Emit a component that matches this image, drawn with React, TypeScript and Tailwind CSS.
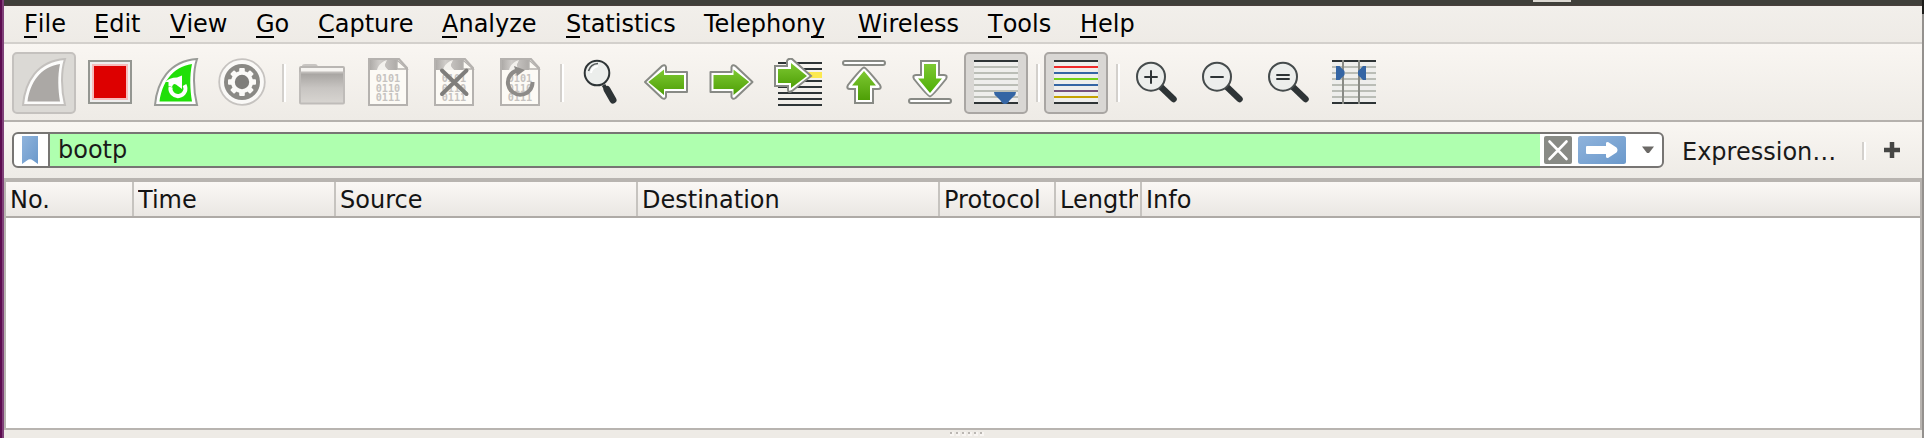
import React from "react";

const DARK = "#2e3436";

function Menu({ w, a = "", u, b }: { w: string; a?: string; u: string; b: string }) {
  return (
    <div className={`${w} shrink-0`}>
      {a}
      <span className="relative inline-block">
        {u}
        <span className="absolute left-0 right-px top-[30px] h-[2px] bg-black" />
      </span>
      {b}
    </div>
  );
}

function Tool({ children, state = "" }: { children: React.ReactNode; state?: string }) {
  return (
    <div className={`flex h-[62px] w-[64px] shrink-0 justify-center rounded-[5px] border-2 pt-[4px] ${state || "border-transparent"}`}>
      <svg width="48" height="48" viewBox="0 0 48 48" className="shrink-0">
        {children}
      </svg>
    </div>
  );
}

function Sep() {
  return (
    <div className="mt-[12px] flex h-[38px] w-[12px] shrink-0 self-start pl-[6px]">
      <div className="w-[2px] bg-[#d3d0cc]" />
      <div className="w-[2px] bg-white" />
    </div>
  );
}

function Fin({ outline, edge, fill }: { outline: string; edge: string; fill: string }) {
  return (
    <>
      <path d="M3 47C5 24 17 3 45 1C41 13 41 31 45 47Z" fill={edge} stroke={outline} strokeWidth="2" />
      <path d="M7.5 43.5C10 25 20 9 40 6C37.5 18 38 31 40 43.5Z" fill={fill} />
    </>
  );
}

function Doc() {
  return (
    <>
      <path d="M5 1H35L43 10V47H5Z" fill="#fcfaf5" />
      <path d="M6 2H33V12H24L20 8L23 2L14 12H6Z" fill="url(#docband)" />
      <path d="M23 2C17 4 14 8 13 12H24C20 9 20 5 23 2Z" fill="#f3f1ed" />
      <path d="M33 2V11H43Z" fill="#fcfaf5" stroke="#b5b2af" strokeWidth="1.4" />
      <path d="M5 1H35L43 10V47H5Z" fill="none" stroke="#b5b2af" strokeWidth="2" />
      <g fontFamily="DejaVu Sans Mono, monospace" fontSize="10.2" fill="#c6c3c0" fontWeight="bold">
        <text x="11.7" y="24.2">0101</text>
        <text x="11.7" y="33.6">0110</text>
        <text x="11.7" y="43">0111</text>
      </g>
    </>
  );
}

const backPath = "M3 24L20 8Q23 6 24 9V14H45V34H24V39Q23 42 20 40Z";
const backInner = "M6.3 24L22 11.5V17H42V31H22V37Z";

function Arrow() {
  return (
    <>
      <path d={backPath} fill="#fff" stroke="#888a85" strokeWidth="2" strokeLinejoin="round" />
      <path d={backInner} fill="url(#green)" />
    </>
  );
}

function UpArrow({ id }: { id: string }) {
  return (
    <>
      <rect x="3" y="3" width="42" height="4" rx="2" fill="#fff" stroke="#888a85" strokeWidth="2" />
      <path d="M24 9.5Q26 9.5 40 27Q42 31 38 31H33V45H15V31H10Q6 31 8 27Q22 9.5 24 9.5Z" fill="#fff" stroke="#888a85" strokeWidth="2" />
      <path d="M24 13L36 27.5H30V42H18V27.5H12Z" fill={`url(#${id})`} />
    </>
  );
}

function Sheet({ colors }: { colors: string[] }) {
  return (
    <>
      <rect x="2" y="2" width="44" height="44" fill="#eeeeec" />
      {colors.map((c, i) => (
        <rect key={i} x="2" y={2 + i * 6} width="44" height="2" fill={c} />
      ))}
    </>
  );
}
const G = "#babdb6";
const plain = [DARK, G, G, G, G, G, G, DARK];

function Lens({ children }: { children: React.ReactNode }) {
  return (
    <>
      <path d="M29 29L41.5 41" stroke={DARK} strokeWidth="6.5" strokeLinecap="round" />
      <circle cx="19" cy="18.7" r="14" fill="#eceeec" stroke="#454b4c" strokeWidth="2" />
      <g stroke={DARK} strokeWidth="2">{children}</g>
    </>
  );
}

const teeth = [0, 45, 90, 135, 180, 225, 270, 315];

function Defs() {
  return (
    <svg width="0" height="0" className="absolute">
      <defs>
        <linearGradient id="green" x1="0" y1="0" x2="0" y2="1">
          <stop offset="0" stopColor="#7dc832" /><stop offset="1" stopColor="#4e9f06" />
        </linearGradient>
        <linearGradient id="greenflip" x1="0" y1="1" x2="0" y2="0">
          <stop offset="0" stopColor="#7dc832" /><stop offset="1" stopColor="#4eaf06" />
        </linearGradient>
        <linearGradient id="folder" x1="0" y1="0" x2="0" y2="1">
          <stop offset="0" stopColor="#a5a29f" /><stop offset=".5" stopColor="#c8c5c2" /><stop offset="1" stopColor="#d8d5d1" />
        </linearGradient>
        <linearGradient id="docband" x1="0" y1="0" x2="1" y2="0">
          <stop offset="0" stopColor="#aeaba8" /><stop offset=".35" stopColor="#cfccc9" /><stop offset="1" stopColor="#aeaba8" />
        </linearGradient>
        <linearGradient id="blue" x1="0" y1="0" x2="1" y2="1">
          <stop offset="0" stopColor="#8fb3dc" /><stop offset="1" stopColor="#6b99cb" />
        </linearGradient>
      </defs>
    </svg>
  );
}

function Toolbar() {
  const pressed = "border-[#a9a6a3] bg-[#d9d7d4]";
  return (
    <div className="flex h-[78px] gap-[2px] border-b-2 border-[#b5b1ad] bg-linear-to-b from-[#f9f6f2] to-[#eeebe6] pt-[8px] pl-[8px]">
      <Tool state="border-[#c4c1be] bg-[#dbd9d5]"><Fin outline="#c3c0bd" edge="#fcfcfb" fill="#aba8a5" /></Tool>
      <Tool>
        <rect x="3" y="3" width="42" height="42" fill="#eeeeee" stroke="#949691" strokeWidth="2" />
        <rect x="6" y="6" width="36" height="36" fill="#f6bcbc" />
        <rect x="8" y="8" width="32" height="32" fill="#dd0000" />
      </Tool>
      <Tool>
        <Fin outline="#999b97" edge="#fff" fill="#20df08" />
        <path d="M32.5 27A7.5 7.5 0 1 1 18.6 29" fill="none" stroke="#fff" strokeWidth="4" />
        <path d="M13.5 24Q17 19.5 25 19.5L30 17.5V31L24 26.5Q21 25 20 29L16.5 28V24Z" fill="#fff" />
      </Tool>
      <Tool>
        <circle cx="24" cy="24" r="22.8" fill="#faf9f7" stroke="#c6c3c0" strokeWidth="1.8" />
        <circle cx="24" cy="24" r="18" fill="#8a8985" />
        <circle cx="24" cy="24" r="11" fill="#fbfaf8" />
        {teeth.map((t) => (
          <rect key={t} x="21.2" y="10" width="5.6" height="6" rx="1" fill="#fbfaf8" transform={`rotate(${t} 24 24)`} />
        ))}
        <circle cx="24" cy="24" r="7.2" fill="#7f7e7b" />
      </Tool>
      <Sep />
      <Tool>
        <path d="M5 10V8Q5 7 7 7H17Q19 7 19 10" fill="#d8d5d1" stroke="#c8c5c2" strokeWidth="2" />
        <rect x="2" y="9" width="44" height="8" rx="1" fill="#f6f4f1" stroke="#b9b6b3" strokeWidth="2" />
        <rect x="2" y="14.5" width="44" height="31" rx="1" fill="url(#folder)" stroke="#bfbcb9" strokeWidth="2" />
      </Tool>
      <Tool><Doc /></Tool>
      <Tool><Doc /><path d="M12 12.5L36.5 36M36.5 12.5L12 36" stroke="#7f7e7b" strokeWidth="4" strokeLinecap="round" /></Tool>
      <Tool>
        <Doc />
        <path d="M36.5 24A12.3 12.3 0 1 1 21 12.5" fill="none" stroke="#8d8b88" strokeWidth="4" />
        <path d="M18 8L29 12L21 18Z" fill="#8d8b88" />
      </Tool>
      <Sep />
      <Tool>
        <path d="M27.5 27L30 31" stroke={DARK} strokeWidth="4" />
        <path d="M31 31.5L37 42" stroke={DARK} strokeWidth="7" strokeLinecap="round" />
        <circle cx="21" cy="15" r="12.3" fill="#eceeec" stroke={DARK} strokeWidth="2" />
        <path d="M12.5 13Q14.5 6 22 5.5" fill="none" stroke="#555b5c" strokeWidth="1.6" />
        <path d="M15 15Q15.5 9.5 22 8" fill="none" stroke="#fff" strokeWidth="2" />
      </Tool>
      <Tool><Arrow /></Tool>
      <Tool><g transform="matrix(-1 0 0 1 47.5 0)"><Arrow /></g></Tool>
      <Tool>
        {[4, 10, 22, 28, 34, 40, 46].map((y) => <rect key={y} x="4" y={y} width="44" height="2" fill={DARK} />)}
        <rect x="28" y="14" width="20" height="6" fill="#fce94f" />
        <path d="M1 8H13V3Q14 0 18 1L37 18L18 33Q14 35 14 32V28H1Z" fill="#fff" stroke="#888a85" strokeWidth="2" />
        <path d="M4 11H17V5L33 18L17 30V25H4Z" fill="url(#green)" />
      </Tool>
      <Tool><UpArrow id="green" /></Tool>
      <Tool><g transform="matrix(1 0 0 -1 0 48)"><UpArrow id="greenflip" /></g></Tool>
      <Tool state={pressed}>
        <Sheet colors={plain} />
        <path d="M22 34H44Q44 37 41.5 38.5L37.5 42.5Q36.5 45 34 46H32Q29.5 45 28.5 42.5L24.5 38.5Q22 37 22 34Z" fill="#3465a4" />
      </Tool>
      <Sep />
      <Tool state={pressed}>
        <Sheet colors={[DARK, "#ef2929", "#3465a4", "#73d216", "#3465a4", "#75507b", "#c4a000", DARK]} />
      </Tool>
      <Sep />
      <Tool><Lens><path d="M12.3 19H25.7M19 12.3V25.7" /></Lens></Tool>
      <Tool><Lens><path d="M12.3 19H25.7" /></Lens></Tool>
      <Tool><Lens><path d="M12.3 17H25.7M12.3 21H25.7" /></Lens></Tool>
      <Tool>
        <Sheet colors={plain} />
        <path d="M13 2V46M29 2V46" stroke="#888a85" strokeWidth="2" />
        <path d="M6 8H9.5L14.5 13V17L9.5 22H6ZM36 8H33L28 13V17L33 22H36Z" fill="#3465a4" />
      </Tool>
    </div>
  );
}

function FilterBar() {
  return (
    <div className="flex h-[60px] border-b-4 border-[#b8b4b0] bg-linear-to-b from-[#f9f6f2] to-[#eeebe6] pt-[10px] pl-[8px]">
      <div className="flex h-[36px] w-[1652px] shrink-0 overflow-hidden rounded-[6px] border-2 border-[#777573] bg-white">
        <div className="flex w-[36px] shrink-0 border-r-2 border-[#777573] pt-[2px] pl-[8px]">
          <svg width="16" height="28"><path d="M0 0H16V28L11 24.5Q8 22 5 24.5L0 28Z" fill="url(#blue)" /></svg>
        </div>
        <div className="w-[1490px] shrink-0 bg-[#afffaf] pl-[8px] leading-[32px]">bootp</div>
        <div className="flex items-center pl-[4px]">
          <svg width="28" height="28">
            <rect width="28" height="28" rx="2" fill="#888a85" />
            <path d="M5.5 5.5L22.5 23M22.5 5.5L5.5 23" stroke="#fff" strokeWidth="2.6" strokeLinecap="round" />
          </svg>
          <svg width="48" height="28" className="ml-[6px]">
            <rect width="48" height="28" rx="2.5" fill="url(#blue)" />
            <path d="M9 10H28V7Q28 6 30 6L38.5 11.5Q40.5 14 38.5 16.5L30 22Q28 22 28 21V18H9Q8 18 8 17V11Q8 10 9 10Z" fill="#fff" />
          </svg>
          <svg width="14" height="8" className="ml-[15px]"><path d="M1 .5H13L8 7H6Z" fill="#6b6966" /></svg>
        </div>
      </div>
      <div className="mt-[2px] ml-[18px] w-[180px] shrink-0 leading-[36px]">Expression…</div>
      <div className="mt-[10px] flex h-[18px] w-[4px] shrink-0">
        <div className="w-[2px] bg-[#d3d0cc]" /><div className="w-[2px] bg-white" />
      </div>
      <svg width="16" height="16" className="mt-[10px] ml-[18px] shrink-0"><path d="M0 8H16M8 0V16" stroke="#464644" strokeWidth="4.5" /></svg>
    </div>
  );
}

const cols = [
  ["No.", "w-[128px]"],
  ["Time", "w-[202px]"],
  ["Source", "w-[302px]"],
  ["Destination", "w-[302px]"],
  ["Protocol", "w-[116px]"],
  ["Length", "w-[86px]"],
];

export default function App() {
  return (
    <div className="flex h-[438px] w-[1924px] overflow-hidden bg-[#eeebe6] font-['DejaVu_Sans',sans-serif] text-[24px] text-[#1a1a1a]">
      <Defs />
      <div className="w-[4px] shrink-0 border-r-2 border-[#7f4078] bg-[#5c0c50]" />
      <div className="flex w-[1918px] shrink-0 flex-col">
        <div className="flex h-[6px] shrink-0 items-start border-b border-[#4a3f3c] bg-[#403f3a]">
          <div className="ml-[1529px] h-[2px] w-[38px] bg-[#dcd8d2]" />
        </div>
        <div className="flex h-[38px] shrink-0 border-b-2 border-[#d3d0cc] bg-linear-to-b from-[#f2efeb] to-[#eeebe6] pl-[20px] leading-[36px] text-black">
          <Menu w="w-[70px]" u="F" b="ile" />
          <Menu w="w-[76px]" u="E" b="dit" />
          <Menu w="w-[86px]" u="V" b="iew" />
          <Menu w="w-[62px]" u="G" b="o" />
          <Menu w="w-[124px]" u="C" b="apture" />
          <Menu w="w-[124px]" u="A" b="nalyze" />
          <Menu w="w-[138px]" u="S" b="tatistics" />
          <Menu w="w-[154px]" a="Telephon" u="y" b="" />
          <Menu w="w-[130px]" u="W" b="ireless" />
          <Menu w="w-[92px]" u="T" b="ools" />
          <Menu w="w-[80px]" u="H" b="elp" />
        </div>
        <Toolbar />
        <FilterBar />
        <div className="flex grow flex-col border-x-2 border-b-2 border-[#b8b4b0] bg-white">
          <div className="flex h-[36px] shrink-0 border-b-2 border-[#aeaaa6] bg-linear-to-b from-[#fbf8f5] to-[#eae7e3] leading-[36px] text-[#141414]">
            {cols.map(([t, w]) => (
              <div key={t} className={`${w} flex shrink-0 border-r-2 border-[#c6c3bf] px-[4px]`}>
                <div className="mr-[-2px] grow overflow-hidden">{t}</div>
              </div>
            ))}
            <div className="pl-[4px]">Info</div>
          </div>
        </div>
        <div className="flex h-[8px] shrink-0 gap-[4px] pt-[2px] pl-[946px]">
          {[0, 1, 2, 3, 4, 5].map((i) => (
            <div key={i} className="h-[4px] w-[4px] border-r-2 border-b-2 border-[#f8f5f2] bg-[#bab6b2] [&+&]:ml-[-2px]" />
          ))}
        </div>
      </div>
      <div className="flex w-[2px] shrink-0 flex-col bg-[#94918e]"><div className="h-[14px] bg-[#1c1c1a]" /></div>
    </div>
  );
}
